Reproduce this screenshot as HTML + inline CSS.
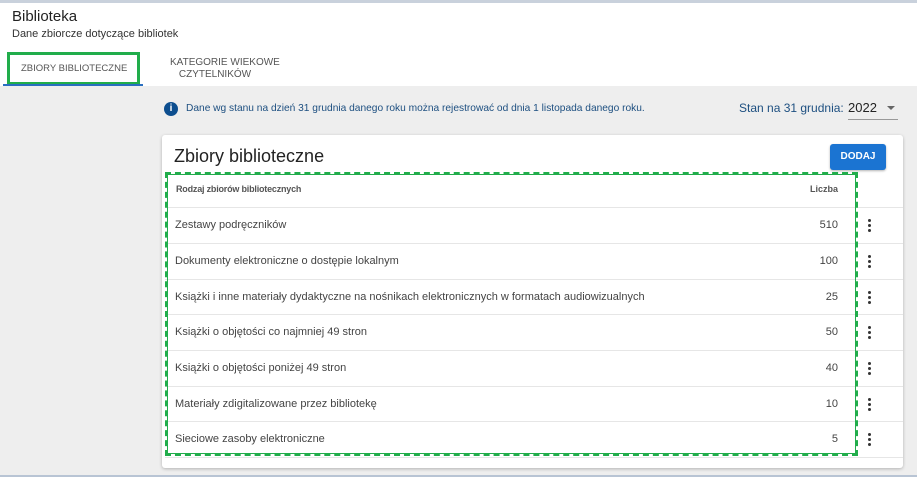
<!DOCTYPE html>
<html><head><meta charset="utf-8"><style>
*{box-sizing:border-box;margin:0;padding:0}
body{width:917px;height:477px;overflow:hidden;background:#eeeeee;font-family:"Liberation Sans",sans-serif;position:relative;color:#222}
.top{position:absolute;left:0;top:0;width:917px;height:86px;background:#fff;border-top:3px solid #c9d1dc}
.abs{position:absolute;white-space:nowrap}
.card{position:absolute;left:162px;top:135px;width:741px;height:333px;background:#fff;border-radius:3px;box-shadow:0 1px 3px rgba(0,0,0,.25)}
.row{position:absolute;left:165px;width:738px;border-top:1px solid #e6e6e6;height:36px}
.row span{position:absolute;top:11px;font-size:11px;color:#444}
.row .n{right:65px}
.row .d{left:703px;top:11px;width:3px}
.dot{display:block;width:3px;height:3px;border-radius:50%;background:#333;margin-bottom:2px}
</style></head><body>
<div class="top"></div>
<div class="abs" style="left:12px;top:8px;font-size:15px;color:#222">Biblioteka</div>
<div class="abs" style="left:12px;top:28px;font-size:11px;color:#333">Dane zbiorcze dotyczące bibliotek</div>
<div class="abs" style="left:7px;top:52px;width:133px;height:33px;border:3px solid #21ad4b;background:#fff"></div>
<div class="abs" style="left:3px;top:84px;width:140px;height:2px;background:#2a6fc0"></div>
<div class="abs" style="left:21px;top:63px;font-size:9.5px;color:#555">ZBIORY BIBLIOTECZNE</div>
<div class="abs" style="left:170px;top:57px;font-size:10px;color:#555;text-align:center;line-height:12px;width:90px">KATEGORIE WIEKOWE<br>CZYTELNIKÓW</div>
<div class="abs" style="left:164px;top:102px;width:14px;height:14px;border-radius:50%;background:#0d4e8f;color:#fff;font-size:10px;font-weight:bold;text-align:center;line-height:14px">i</div>
<div class="abs" style="left:186px;top:103px;font-size:10.2px;color:#1d4f80">Dane wg stanu na dzień 31 grudnia danego roku można rejestrować od dnia 1 listopada danego roku.</div>
<div class="abs" style="left:739px;top:101px;font-size:12px;color:#1d4f80">Stan na 31 grudnia:</div>
<div class="abs" style="left:848px;top:100px;font-size:13px;color:#222">2022</div>
<div class="abs" style="left:887px;top:106px;width:0;height:0;border-left:4px solid transparent;border-right:4px solid transparent;border-top:4px solid #666"></div>
<div class="abs" style="left:848px;top:119px;width:50px;height:1px;background:#999"></div>
<div class="card"></div>
<div class="abs" style="left:174px;top:146px;font-size:18px;color:#222">Zbiory biblioteczne</div>
<div class="abs" style="left:830px;top:144px;width:56px;height:26px;background:#1b74d2;border-radius:3px;color:#fff;font-size:10px;font-weight:bold;text-align:center;line-height:26px;box-shadow:0 1px 2px rgba(0,0,0,.3)">DODAJ</div>
<div class="abs" style="left:176px;top:184px;font-size:9px;color:#555;font-weight:bold;letter-spacing:-0.2px">Rodzaj zbiorów bibliotecznych</div>
<div class="abs" style="left:810px;top:184px;font-size:9px;color:#555;font-weight:bold">Liczba</div>
<div class="row" style="top:207px"><span style="left:10px">Zestawy podręczników</span><span class="n">510</span><span class="d"><i class="dot"></i><i class="dot"></i><i class="dot"></i></span></div>
<div class="row" style="top:243px"><span style="left:10px">Dokumenty elektroniczne o dostępie lokalnym</span><span class="n">100</span><span class="d"><i class="dot"></i><i class="dot"></i><i class="dot"></i></span></div>
<div class="row" style="top:279px"><span style="left:10px">Książki i inne materiały dydaktyczne na nośnikach elektronicznych w formatach audiowizualnych</span><span class="n">25</span><span class="d"><i class="dot"></i><i class="dot"></i><i class="dot"></i></span></div>
<div class="row" style="top:314px"><span style="left:10px">Książki o objętości co najmniej 49 stron</span><span class="n">50</span><span class="d"><i class="dot"></i><i class="dot"></i><i class="dot"></i></span></div>
<div class="row" style="top:350px"><span style="left:10px">Książki o objętości poniżej 49 stron</span><span class="n">40</span><span class="d"><i class="dot"></i><i class="dot"></i><i class="dot"></i></span></div>
<div class="row" style="top:386px"><span style="left:10px">Materiały zdigitalizowane przez bibliotekę</span><span class="n">10</span><span class="d"><i class="dot"></i><i class="dot"></i><i class="dot"></i></span></div>
<div class="row" style="top:421px"><span style="left:10px">Sieciowe zasoby elektroniczne</span><span class="n">5</span><span class="d"><i class="dot"></i><i class="dot"></i><i class="dot"></i></span></div>
<div class="row" style="top:457px;height:1px"></div>
<div class="abs" style="left:165px;top:172px;width:693px;height:284px;border:2px dashed #21ad4b;outline:1px solid #21ad4b;outline-offset:-3px"></div>
<div class="abs" style="left:0;top:475px;width:917px;height:2px;background:#b8c4d4"></div>
</body></html>
